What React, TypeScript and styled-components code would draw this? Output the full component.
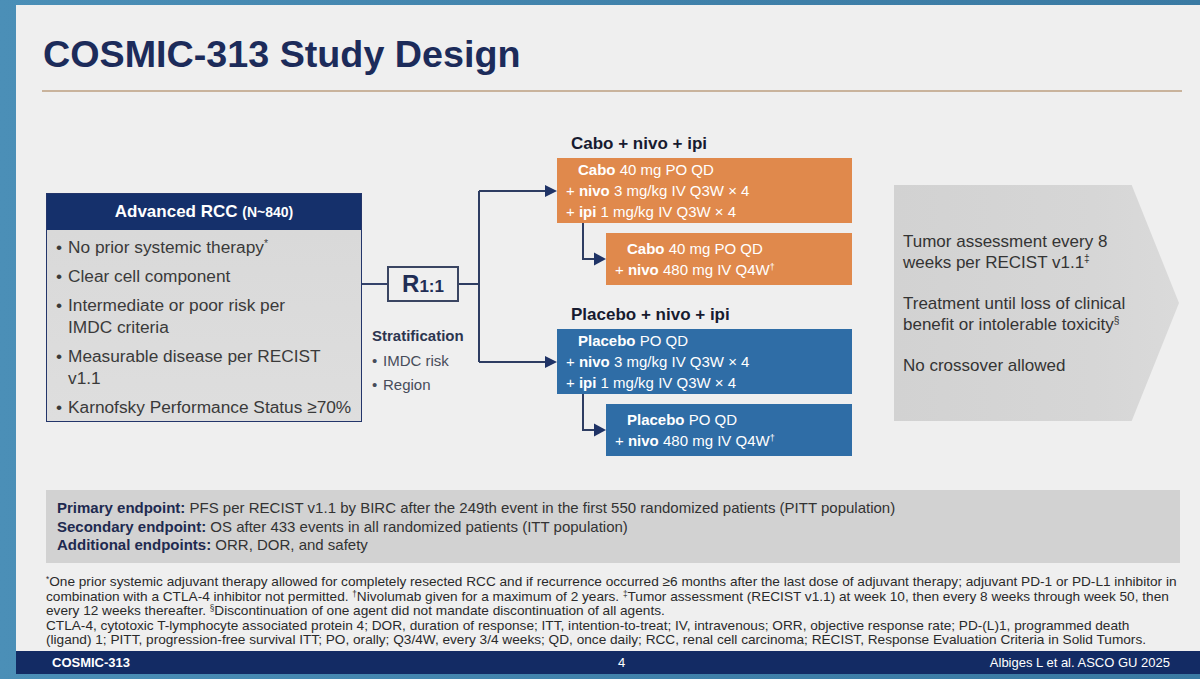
import React from "react";
import styled, { createGlobalStyle } from "styled-components";

const GlobalStyle = createGlobalStyle`
  html, body {
    margin: 0;
    padding: 0;
  }
  body {
    width: 1200px;
    height: 679px;
    overflow: hidden;
    background: linear-gradient(90deg, #4b8fb7 0%, #3f80a9 60%, #3a7aa3 100%);
    font-family: "Liberation Sans", Arial, sans-serif;
  }
`;

const Screen = styled.div`
  box-sizing: border-box;
  height: 679px;
  padding: 5px 0 0 16px;
`;

const Slide = styled.div`
  width: 1184px;
  height: 669px;
  background: #efefef;
  display: flex;
  flex-direction: column;
`;

const Content = styled.div`
  flex: 1;
  padding: 0 20px 0 30px;
  display: flex;
  flex-direction: column;
`;

const Title = styled.h1`
  margin: 27px 0 0 -3px;
  font-size: 37.7px;
  line-height: 44px;
  font-weight: 700;
  color: #1c2b5a;
`;

const Rule = styled.div`
  margin: 14px -2px 0 -4px;
  height: 2px;
  background: #c9b39c;
`;

const Diagram = styled.div`
  margin-top: 40px;
  height: 325px;
  display: flex;
  align-items: flex-start;
`;

/* population box */
const PopBox = styled.div`
  box-sizing: border-box;
  margin-top: 61px;
  width: 316px;
  height: 229px;
  border: 1px solid #23356a;
  background: linear-gradient(180deg, #d8d8d8 0%, #dedede 100%);
  display: flex;
  flex-direction: column;
`;

const PopHeader = styled.div`
  height: 36px;
  background: #15306b;
  color: #fff;
  font-weight: 700;
  font-size: 17px;
  line-height: 36px;
  text-align: center;

  small {
    font-size: 14px;
  }
`;

const BulletList = styled.ul`
  list-style: none;
  margin: 0;
  padding: 6px 0 0 9px;
  display: flex;
  flex-direction: column;
  gap: 7px;
`;

const BulletItem = styled.li`
  display: flex;
  font-size: 17.3px;
  line-height: 22px;
  color: #3a3a3a;
  white-space: nowrap;

  &::before {
    content: "•";
    width: 12px;
    flex: none;
  }
`;

/* randomisation */
const RandomColumn = styled.div`
  width: 97px;
  flex: none;
  margin-top: 134px;
  display: flex;
  flex-direction: column;
`;

const RandomRow = styled.div`
  display: flex;
  align-items: center;
`;

const Wire = styled.div`
  flex: 1;
  height: 2px;
  background: #34426a;
`;

const RandomBox = styled.div`
  box-sizing: border-box;
  width: 72px;
  height: 36px;
  border: 2px solid #3a4562;
  color: #1f2d55;
  font-weight: 700;
  display: flex;
  align-items: baseline;
  justify-content: center;
  line-height: 32px;

  b {
    font-size: 24px;
  }
  span {
    font-size: 17px;
  }
`;

const Strat = styled.div`
  margin: 24px 0 0 10px;
  white-space: nowrap;
`;

const StratTitle = styled.div`
  font-size: 15px;
  font-weight: 700;
  line-height: 20px;
  color: #2c3550;
  margin-bottom: 3px;
`;

const StratList = styled.ul`
  list-style: none;
  margin: 0;
  padding: 0;
`;

const StratItem = styled.li`
  display: flex;
  font-size: 15px;
  line-height: 24px;
  color: #474c5a;

  &::before {
    content: "•";
    width: 11px;
  }
`;

const BracketSvg = styled.svg`
  flex: none;
  display: block;
`;

/* treatment arms */
const Arms = styled.div`
  width: 295px;
  flex: none;
  display: flex;
  flex-direction: column;
`;

const ArmGroup = styled.div<{ $first?: boolean }>`
  margin-top: ${(p) => (p.$first ? 0 : 18)}px;
  display: flex;
  flex-direction: column;
`;

const ArmLabel = styled.div`
  margin: 0 0 2px 14px;
  font-size: 17px;
  font-weight: 700;
  line-height: 24px;
  color: #171b30;
`;

type Tone = "orange" | "blue";

const DoseBox = styled.div<{ $tone: Tone; $sub?: boolean }>`
  box-sizing: border-box;
  width: ${(p) => (p.$sub ? 246 : 295)}px;
  height: ${(p) => (p.$sub ? 52 : 65)}px;
  margin-top: ${(p) => (p.$sub ? 10 : 0)}px;
  padding: ${(p) => (p.$sub ? "5px 0 0 9px" : "1px 0 0 9px")};
  background: ${(p) => (p.$tone === "orange" ? "#e0894c" : "#2f6da6")};
  color: #fff;
  font-size: 15px;
  line-height: 21px;
`;

const DoseLine = styled.div<{ $indent?: boolean }>`
  padding-left: ${(p) => (p.$indent ? 12 : 0)}px;
  white-space: nowrap;
`;

const SubRow = styled.div`
  display: flex;
  align-items: flex-start;
`;

/* follow-up chevron */
const Chevron = styled.div`
  box-sizing: border-box;
  flex: none;
  margin: 53px 0 0 42px;
  width: 285px;
  height: 236px;
  padding-left: 9px;
  background: linear-gradient(90deg, #d2d2d2 0%, #d6d6d6 70%, #dadada 100%);
  clip-path: polygon(0 0, 83.4% 0, 100% 50%, 83.4% 100%, 0 100%);
  display: flex;
  flex-direction: column;
  justify-content: center;
  gap: 20px;
`;

const ChevronPara = styled.p`
  margin: 0;
  font-size: 17px;
  line-height: 21px;
  color: #343434;
  white-space: nowrap;
`;

const Sup = styled.sup`
  font-size: 0.6em;
  line-height: 0;
  vertical-align: 0.55em;
`;

/* endpoints and notes */
const Endpoints = styled.div`
  margin-top: 33px;
  height: 73px;
  box-sizing: border-box;
  padding: 9px 11px;
  background: #d2d2d2;
  font-size: 15px;
  line-height: 18.5px;
  color: #333;
  white-space: nowrap;

  b {
    color: #1e2a50;
  }
`;

const Notes = styled.div`
  margin-top: 12px;
  font-size: 13.65px;
  line-height: 14.5px;
  color: #2a2a2a;
  white-space: nowrap;
`;

const Footer = styled.div`
  height: 23px;
  background: #132b64;
  color: #fff;
  display: grid;
  grid-template-columns: 566px auto 1fr;
  align-items: center;
  padding: 0 30px 0 36px;
  font-size: 13px;
`;

const FooterTag = styled.span`
  font-weight: 700;
`;

const FooterRef = styled.span`
  text-align: right;
`;

const lineColor = "#2e3d62";
const headColor = "#1f3366";

const Bracket = () => (
  <BracketSvg width={98} height={325} viewBox="0 0 98 325">
    <path
      d="M0 152 H20 M20 59 V230 M20 59 H87 M20 230 H87"
      stroke={lineColor}
      strokeWidth={2}
      fill="none"
    />
    <polygon points="86,53 98,59 86,65" fill={headColor} />
    <polygon points="86,224 98,230 86,236" fill={headColor} />
  </BracketSvg>
);

const SubArrow = () => (
  <BracketSvg width={49} height={62} viewBox="0 0 49 62">
    <path d="M26 0 V36 H38" stroke={lineColor} strokeWidth={2} fill="none" />
    <polygon points="37,29.5 49,36 37,42.5" fill={headColor} />
  </BracketSvg>
);

type Arm = {
  label: string;
  tone: Tone;
  drug: string;
  dose: string;
};

const arms: Arm[] = [
  { label: "Cabo + nivo + ipi", tone: "orange", drug: "Cabo", dose: "40 mg PO QD" },
  { label: "Placebo + nivo + ipi", tone: "blue", drug: "Placebo", dose: "PO QD" },
];

const criteria: React.ReactNode[] = [
  <>
    No prior systemic therapy<Sup>*</Sup>
  </>,
  "Clear cell component",
  <>
    Intermediate or poor risk per
    <br />
    IMDC criteria
  </>,
  <>
    Measurable disease per RECIST
    <br />
    v1.1
  </>,
  "Karnofsky Performance Status ≥70%",
];

export default function App() {
  return (
    <>
      <GlobalStyle />
      <Screen>
        <Slide>
          <Content>
            <Title>COSMIC-313 Study Design</Title>
            <Rule />

            <Diagram>
              <PopBox>
                <PopHeader>
                  Advanced RCC <small>(N~840)</small>
                </PopHeader>
                <BulletList>
                  {criteria.map((c, i) => (
                    <BulletItem key={i}>
                      <span>{c}</span>
                    </BulletItem>
                  ))}
                </BulletList>
              </PopBox>

              <RandomColumn>
                <RandomRow>
                  <Wire />
                  <RandomBox>
                    <b>R</b>
                    <span>1:1</span>
                  </RandomBox>
                </RandomRow>
                <Strat>
                  <StratTitle>Stratification</StratTitle>
                  <StratList>
                    <StratItem>IMDC risk</StratItem>
                    <StratItem>Region</StratItem>
                  </StratList>
                </Strat>
              </RandomColumn>

              <Bracket />

              <Arms>
                {arms.map((a, i) => (
                  <ArmGroup key={a.label} $first={i === 0}>
                    <ArmLabel>{a.label}</ArmLabel>
                    <DoseBox $tone={a.tone}>
                      <DoseLine $indent>
                        <b>{a.drug}</b> {a.dose}
                      </DoseLine>
                      <DoseLine>
                        + <b>nivo</b> 3 mg/kg IV Q3W × 4
                      </DoseLine>
                      <DoseLine>
                        + <b>ipi</b> 1 mg/kg IV Q3W × 4
                      </DoseLine>
                    </DoseBox>
                    <SubRow>
                      <SubArrow />
                      <DoseBox $tone={a.tone} $sub>
                        <DoseLine $indent>
                          <b>{a.drug}</b> {a.dose}
                        </DoseLine>
                        <DoseLine>
                          + <b>nivo</b> 480 mg IV Q4W<Sup>†</Sup>
                        </DoseLine>
                      </DoseBox>
                    </SubRow>
                  </ArmGroup>
                ))}
              </Arms>

              <Chevron>
                <ChevronPara>
                  Tumor assessment every 8
                  <br />
                  weeks per RECIST v1.1<Sup>‡</Sup>
                </ChevronPara>
                <ChevronPara>
                  Treatment until loss of clinical
                  <br />
                  benefit or intolerable toxicity<Sup>§</Sup>
                </ChevronPara>
                <ChevronPara>No crossover allowed</ChevronPara>
              </Chevron>
            </Diagram>

            <Endpoints>
              <b>Primary endpoint:</b> PFS per RECIST v1.1 by BIRC after the 249th event in the first 550
              randomized patients (PITT population)
              <br />
              <b>Secondary endpoint:</b> OS after 433 events in all randomized patients (ITT population)
              <br />
              <b>Additional endpoints:</b> ORR, DOR, and safety
            </Endpoints>

            <Notes>
              <Sup>*</Sup>One prior systemic adjuvant therapy allowed for completely resected RCC and if
              recurrence occurred ≥6 months after the last dose of adjuvant therapy; adjuvant PD-1 or PD-L1
              inhibitor in
              <br />
              combination with a CTLA-4 inhibitor not permitted. <Sup>†</Sup>Nivolumab given for a maximum of
              2 years. <Sup>‡</Sup>Tumor assessment (RECIST v1.1) at week 10, then every 8 weeks through week
              50, then
              <br />
              every 12 weeks thereafter. <Sup>§</Sup>Discontinuation of one agent did not mandate
              discontinuation of all agents.
              <br />
              CTLA-4, cytotoxic T-lymphocyte associated protein 4; DOR, duration of response; ITT,
              intention-to-treat; IV, intravenous; ORR, objective response rate; PD-(L)1, programmed death
              <br />
              (ligand) 1; PITT, progression-free survival ITT; PO, orally; Q3/4W, every 3/4 weeks; QD, once
              daily; RCC, renal cell carcinoma; RECIST, Response Evaluation Criteria in Solid Tumors.
            </Notes>
          </Content>

          <Footer>
            <FooterTag>COSMIC-313</FooterTag>
            <span>4</span>
            <FooterRef>Albiges L et al. ASCO GU 2025</FooterRef>
          </Footer>
        </Slide>
      </Screen>
    </>
  );
}
